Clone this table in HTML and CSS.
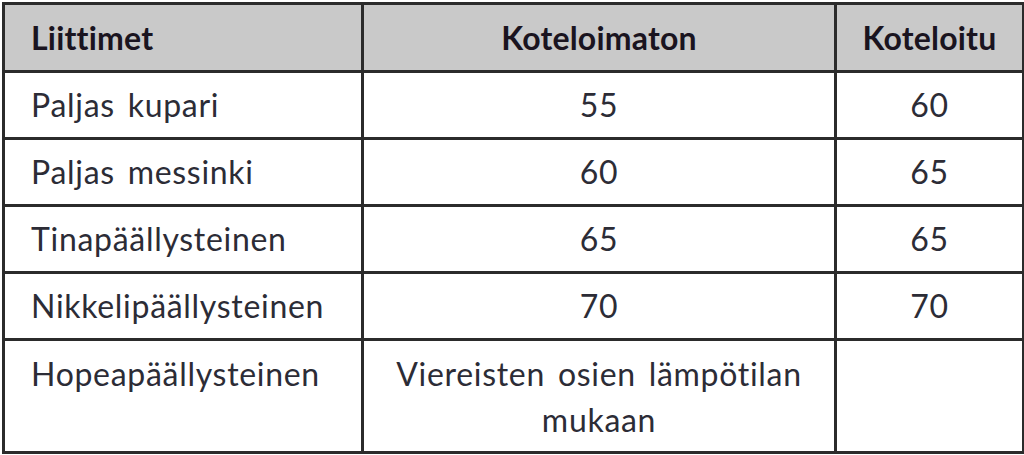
FILE: index.html
```html
<!DOCTYPE html>
<html lang="fi">
<head>
<meta charset="utf-8">
<link rel="stylesheet" href="styles.css">
</head>
<body>
<table class="grid">
  <colgroup>
    <col class="c1"><col class="c2"><col class="c3">
  </colgroup>
  <thead>
    <tr class="head">
      <th class="name">Liittimet</th>
      <th>Koteloimaton</th>
      <th>Koteloitu</th>
    </tr>
  </thead>
  <tbody>
    <tr class="row"><td class="name">Paljas kupari</td><td>55</td><td>60</td></tr>
    <tr class="row"><td class="name">Paljas messinki</td><td>60</td><td>65</td></tr>
    <tr class="row"><td class="name">Tinapäällysteinen</td><td>65</td><td>65</td></tr>
    <tr class="row"><td class="name">Nikkelipäällysteinen</td><td>70</td><td>70</td></tr>
    <tr class="row last"><td class="name">Hopeapäällysteinen</td><td>Viereisten osien lämpötilan<br>mukaan</td><td></td></tr>
  </tbody>
</table>
</body>
</html>
```
FILE: styles.css
```css
html, body {
  margin: 0;
  padding: 0;
  background: #ffffff;
}
body {
  padding: 2px 0 0 2px;
  font-family: Lato, "Open Sans", sans-serif;
  color: #2c2c36;
  font-variant-ligatures: none;
}
.grid {
  border-collapse: collapse;
  table-layout: fixed;
  width: 1020px;
  border: 3px solid #262626;
}
.c1 { width: 359px; }
.c2 { width: 473px; }
.c3 { width: 188px; }
.grid th, .grid td {
  border: 3px solid #2b2b2b;
  font-size: 32px;
  text-align: center;
  vertical-align: middle;
  padding: 0 8px;
  line-height: 44px;
  letter-spacing: 0.7px;
  word-spacing: 4px;
}
.grid th {
  background: #c9c9c9;
  color: #1a1420;
  font-weight: 700;
  letter-spacing: 0.2px;
  word-spacing: 0;
}
.grid .name {
  text-align: left;
  padding-left: 26px;
}
.head { height: 68px; }
.row { height: 67px; }
.row.last { height: 113px; }
.row.last td {
  vertical-align: top;
  padding-top: 10px;
  line-height: 46px;
}
```
